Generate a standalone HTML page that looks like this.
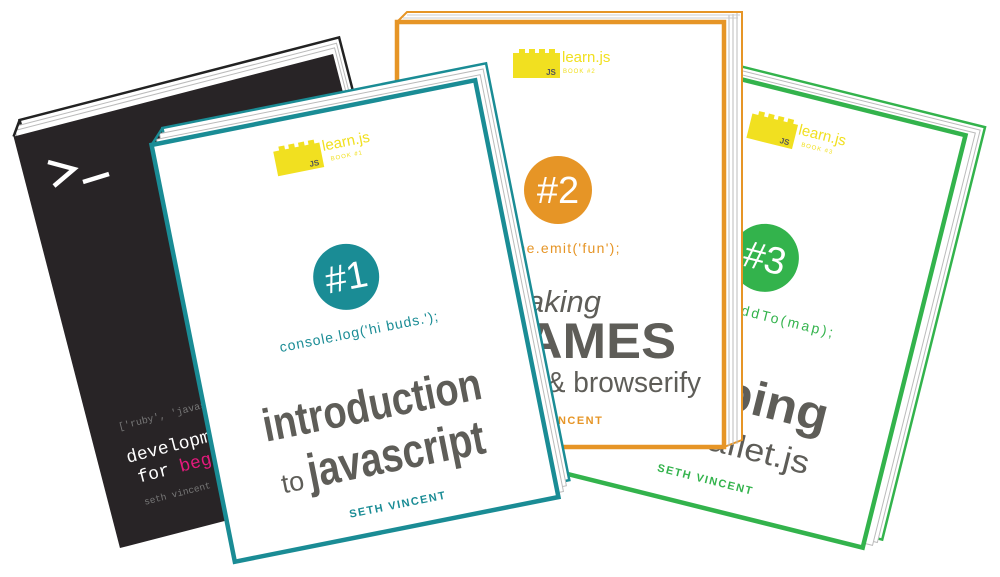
<!DOCTYPE html>
<html><head><meta charset="utf-8"><style>
html,body{margin:0;padding:0;background:#fff;width:1000px;height:577px;overflow:hidden}
svg{display:block}
text{font-family:"Liberation Sans",sans-serif}
.mono{font-family:"Liberation Mono",monospace}
</style></head><body>
<svg width="1000" height="577" viewBox="0 0 1000 577" xmlns="http://www.w3.org/2000/svg">
<defs>
<g id="logo">
  <path d="M-47,-182 h6 v-4 h6 v4 h4 v-4 h6 v4 h4 v-4 h6 v4 h4 v-4 h6 v4 h5 v25 h-47 z" fill="#f1e020"/>
  <text x="-9" y="-160" font-size="8" font-weight="bold" fill="#555" text-anchor="middle">JS</text>
  <text x="2" y="-173" font-size="15" fill="#f1e020">learn.js</text>
</g>
</defs>

<!-- GREEN BOOK (back) -->
<g transform="translate(754,301.5) rotate(14)">
  <rect x="-148" y="-225" width="330" height="425" fill="#fff" stroke="#33b34c" stroke-width="2.5"/>
  <rect x="-152" y="-221" width="330" height="425" fill="#fff" stroke="#bbb" stroke-width="1"/>
  <rect x="-156" y="-217" width="330" height="425" fill="#fff" stroke="#bbb" stroke-width="1"/>
  <rect x="-165" y="-212.5" width="330" height="425" fill="#fff" stroke="#33b34c" stroke-width="4.5"/>
  <use href="#logo"/>
  <text x="8" y="-162" font-size="6" fill="#f1e020" letter-spacing="1">BOOK #3</text>
  <circle cx="0" cy="-45" r="34" fill="#33b34c"/>
  <text x="0" y="-32" font-size="38" fill="#fff" text-anchor="middle">#3</text>
  <text x="0" y="16" font-size="14" fill="#33b34c" text-anchor="middle" textLength="170" letter-spacing="1">marker.addTo(map);</text>
  <text x="-8" y="110" font-size="48" font-weight="bold" fill="#5e5d58" text-anchor="middle" textLength="215" lengthAdjust="spacingAndGlyphs">mapping</text>
  <text x="-10" y="155" font-size="32" fill="#5e5d58" text-anchor="middle" textLength="205" lengthAdjust="spacingAndGlyphs">with leaflet.js</text>
  <text x="-4" y="188" font-size="11" font-weight="bold" fill="#33b34c" text-anchor="middle" letter-spacing="1.5">SETH VINCENT</text>
</g>

<!-- ORANGE BOOK -->
<g>
  <path d="M397,22 L407,12 L742,12 L742,440 L724,447" fill="#fff" stroke="#e69526" stroke-width="2"/>
  <line x1="729" y1="15" x2="729" y2="446" stroke="#bbb"/>
  <line x1="733" y1="14" x2="733" y2="445" stroke="#bbb"/>
  <line x1="737" y1="13" x2="737" y2="444" stroke="#bbb"/>
  <line x1="407" y1="15" x2="740" y2="15" stroke="#ccc"/>
  <line x1="403" y1="18" x2="738" y2="18" stroke="#ccc"/>
  <rect x="397" y="22" width="327" height="425" fill="#fff" stroke="#e69526" stroke-width="4.5"/>
  <g transform="translate(560,235)">
    <use href="#logo"/>
    <text x="3" y="-162" font-size="6" fill="#f1e020" letter-spacing="1">BOOK #2</text>
    <circle cx="-2" cy="-45" r="34" fill="#e69526"/>
    <text x="-2" y="-32" font-size="38" fill="#fff" text-anchor="middle">#2</text>
    <text x="-2" y="18" font-size="14" fill="#e69526" text-anchor="middle" textLength="125" letter-spacing="1">game.emit('fun');</text>
    <text x="-9" y="77" font-size="31" font-style="italic" fill="#5e5d58" text-anchor="middle">making</text>
    <text x="20" y="123" font-size="50" font-weight="bold" fill="#5e5d58" text-anchor="middle" textLength="192" lengthAdjust="spacingAndGlyphs">GAMES</text>
    <text x="0" y="157" font-size="29" fill="#5e5d58" text-anchor="middle" textLength="282" lengthAdjust="spacingAndGlyphs">with node &amp; browserify</text>
    <text x="-6" y="189" font-size="11" font-weight="bold" fill="#e69526" text-anchor="middle" letter-spacing="1.5">SETH VINCENT</text>
  </g>
</g>

<!-- BLACK BOOK -->
<g transform="translate(226.5,301) rotate(-14.5)">
  <rect x="-155" y="-227" width="330" height="425" fill="#fff" stroke="#222" stroke-width="2.5"/>
  <rect x="-159" y="-222" width="330" height="425" fill="#fff" stroke="#bbb" stroke-width="1"/>
  <rect x="-162" y="-218" width="330" height="425" fill="#fff" stroke="#bbb" stroke-width="1"/>
  <line x1="-165" y1="-212.5" x2="-155" y2="-227" stroke="#222" stroke-width="2.5"/>
  <rect x="-165" y="-212.5" width="330" height="425" fill="#282426"/>
  <text class="mono" x="-136" y="98" font-size="10" fill="#777">['ruby', 'javascript', 'python']</text>
  <text class="mono" x="-136" y="132" font-size="18" fill="#fff">development</text>
  <text class="mono" x="-130" y="154" font-size="18" fill="#fff">for <tspan fill="#e6197d">beginners</tspan></text>
  <text class="mono" x="-130" y="177" font-size="9.5" fill="#777">seth vincent</text>
</g>
<path d="M48,162 L74,169 L54,186" fill="none" stroke="#fff" stroke-width="4.5"/>
<line x1="83" y1="182" x2="109" y2="174" stroke="#fff" stroke-width="4.5"/>

<!-- TEAL BOOK (front) -->
<g transform="translate(355,321) rotate(-11.3)">
  <rect x="-151" y="-227" width="330" height="425" fill="#fff" stroke="#1a8c95" stroke-width="2.5"/>
  <rect x="-155" y="-222" width="330" height="425" fill="#fff" stroke="#bbb" stroke-width="1"/>
  <rect x="-159" y="-217" width="330" height="425" fill="#fff" stroke="#bbb" stroke-width="1"/>
  <line x1="-165" y1="-212.5" x2="-151" y2="-227" stroke="#1a8c95" stroke-width="2.5"/>
  <rect x="-165" y="-212.5" width="330" height="425" fill="#fff" stroke="#1a8c95" stroke-width="4.5"/>
  <use href="#logo"/>
  <text x="8" y="-162" font-size="6" fill="#f1e020" letter-spacing="1">BOOK #1</text>
  <circle cx="0" cy="-45" r="33" fill="#1a8c95"/>
  <text x="0" y="-32" font-size="38" fill="#fff" text-anchor="middle">#1</text>
  <text x="2" y="16" font-size="14" fill="#1a8c95" text-anchor="middle" textLength="162" letter-spacing="1">console.log('hi buds.');</text>
  <text x="0" y="101" font-size="46" font-weight="bold" fill="#5e5d58" text-anchor="middle" textLength="222" lengthAdjust="spacingAndGlyphs">introduction</text>
  <text x="-104" y="155" font-size="27" fill="#5e5d58">to</text>
  <text x="-76" y="155" font-size="48" font-weight="bold" fill="#5e5d58" textLength="180" lengthAdjust="spacingAndGlyphs">javascript</text>
  <text x="6" y="192" font-size="11" font-weight="bold" fill="#1a8c95" text-anchor="middle" letter-spacing="1.5">SETH VINCENT</text>
</g>
</svg>
</body></html>
